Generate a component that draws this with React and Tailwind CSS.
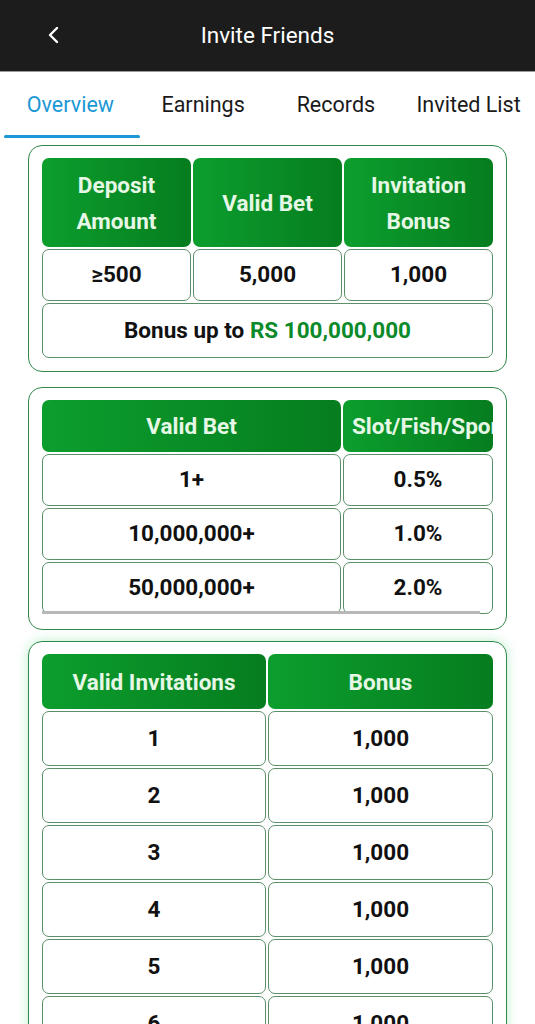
import React from "react";

const font = { fontFamily: "Roboto, 'Noto Sans', sans-serif" };

const headCell =
  "flex items-center justify-center rounded-[7px] bg-gradient-to-r from-[#0c9e2d] to-[#067d1f] text-[#e6f7e6] font-bold text-[22.5px] leading-[36px] text-center overflow-hidden whitespace-nowrap";
const bodyCell =
  "flex items-center justify-center rounded-[7px] border border-[#5b8f68] bg-white text-[#111] font-bold text-[22.5px]";

function Card({ children, glow, extra = "" }) {
  return (
    <div
      className={`mx-[28px] rounded-[14px] border-[1.5px] border-[#2f8a4a] bg-white px-[13px] pt-[12px] ${extra} ${
        glow ? "shadow-[0_0_12px_rgba(40,200,90,0.3)]" : ""
      }`}
    >
      {children}
    </div>
  );
}

export default function App() {
  const tabs = ["Overview", "Earnings", "Records", "Invited List"];
  const invites = [1, 2, 3, 4, 5, 6, 7, 8];

  return (
    <div className="h-[1024px] w-[535px] overflow-hidden bg-white" style={font}>
      {/* top bar */}
      <div className="relative flex h-[72px] items-center justify-center border-b border-[#9a9a9a] bg-[#1c1c1c]">
        <svg
          className="absolute left-[46px] top-[25px] h-[20px] w-[16px]"
          viewBox="0 0 16 20"
          fill="none"
          stroke="white"
          strokeWidth="2.4"
          strokeLinecap="round"
          strokeLinejoin="round"
        >
          <path d="M11 3 L4 10 L11 17" />
        </svg>
        <span className="text-[22.5px] text-white">Invite Friends</span>
      </div>

      {/* tabs */}
      <div className="grid h-[66px] grid-cols-4 pl-[4px]">
        {tabs.map((t, i) => (
          <div key={t} className="relative flex items-center justify-center">
            <span
              className={`whitespace-nowrap text-[21.5px] ${i === 0 ? "text-[#1b98d5]" : "text-[#1a1a1a]"}`}
            >
              {t}
            </span>
            {i === 0 && (
              <div className="absolute bottom-0 left-0 right-[-3px] h-[3px] rounded-full bg-[#1b98d5]" />
            )}
          </div>
        ))}
      </div>

      <div className="pt-[7px]">
        {/* card 1 */}
        <Card extra="pb-[13px]">
          <div className="grid grid-cols-3 gap-[2px]">
            <div className={`${headCell} h-[89px] whitespace-normal`}>
              Deposit
              <br />
              Amount
            </div>
            <div className={`${headCell} h-[89px]`}>Valid Bet</div>
            <div className={`${headCell} h-[89px] whitespace-normal`}>
              Invitation
              <br />
              Bonus
            </div>
            <div className={`${bodyCell} h-[52px]`}>≥500</div>
            <div className={`${bodyCell} h-[52px]`}>5,000</div>
            <div className={`${bodyCell} h-[52px]`}>1,000</div>
            <div className={`${bodyCell} col-span-3 h-[55px]`}>
              Bonus up to&nbsp;<span className="text-[#0b8a2a]">RS 100,000,000</span>
            </div>
          </div>
        </Card>

        <div className="h-[15px]" />

        {/* card 2 */}
        <Card extra="pb-[15px]">
          <div className="grid grid-cols-[299px_150px] gap-[2px]">
            <div className={`${headCell} h-[52px]`}>Valid Bet</div>
            <div className={`${headCell} h-[52px] justify-start pl-[9px]`}>Slot/Fish/Sports</div>
            {[
              ["1+", "0.5%"],
              ["10,000,000+", "1.0%"],
              ["50,000,000+", "2.0%"],
            ].map(([a, b]) => (
              <React.Fragment key={a}>
                <div className={`${bodyCell} h-[52px]`}>{a}</div>
                <div className={`${bodyCell} h-[52px]`}>{b}</div>
              </React.Fragment>
            ))}
          </div>
          <div className="relative -mt-[3px] h-[3px] w-[438px] bg-[#b8b8b8]" />
        </Card>

        <div className="h-[11px]" />

        {/* card 3 */}
        <Card glow extra="pb-[13px]">
          <div className="grid grid-cols-[224px_225px] gap-x-[2px] gap-y-[2px]">
            <div className={`${headCell} h-[55px]`}>Valid Invitations</div>
            <div className={`${headCell} h-[55px]`}>Bonus</div>
            {invites.map((n) => (
              <React.Fragment key={n}>
                <div className={`${bodyCell} h-[55px]`}>{n}</div>
                <div className={`${bodyCell} h-[55px]`}>1,000</div>
              </React.Fragment>
            ))}
          </div>
        </Card>
      </div>
    </div>
  );
}
